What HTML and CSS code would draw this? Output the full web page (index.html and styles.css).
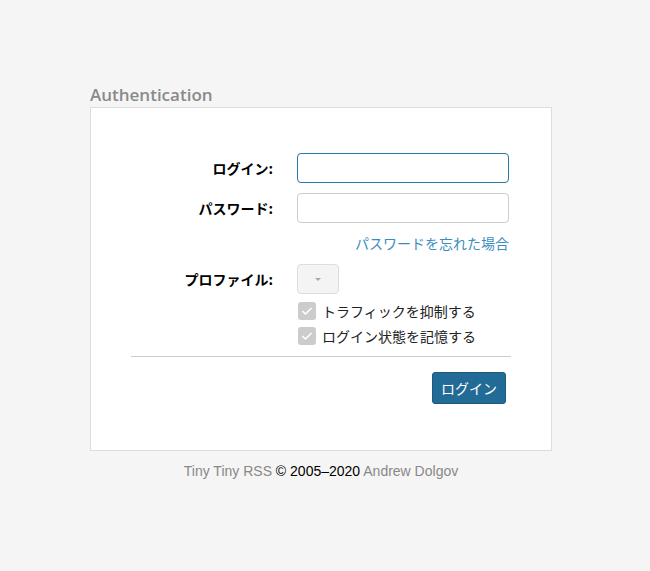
FILE: index.html
```html
<!DOCTYPE html>
<html>
    <head>
        <meta charset="UTF-8">
        <title>Tiny Tiny RSS : ログイン</title>
        <link rel="stylesheet" href="styles.css">
    </head>
    <body>
        <div class="container">
            <h1 class="title">Authentication</h1>
            <div class="panel">
                <form class="loginForm">
                    <div class="row rowInput">
                        <label class="label">ログイン:</label>
                        <div class="field"><input class="input inputFocus" type="text"></div>
                    </div>
                    <div class="row rowInput">
                        <label class="label">パスワード:</label>
                        <div class="field"><input class="input" type="password"></div>
                    </div>
                    <div class="row">
                        <div class="label"></div>
                        <div class="field linkField"><a class="forgot" href="#">パスワードを忘れた場合</a></div>
                    </div>
                    <div class="row rowProfile">
                        <label class="label">プロファイル:</label>
                        <div class="field"><div class="select"><span class="caret"></span></div></div>
                    </div>
                    <div class="row rowCheck">
                        <div class="label"></div>
                        <div class="field">
                            <label class="check"><span class="box"><svg width="12" height="10" viewBox="0 0 12 10"><path d="M1.5 5.2 L4.5 8 L10.5 2" fill="none" stroke="#fff" stroke-width="1.6"/></svg></span>トラフィックを抑制する</label>
                            <label class="check"><span class="box"><svg width="12" height="10" viewBox="0 0 12 10"><path d="M1.5 5.2 L4.5 8 L10.5 2" fill="none" stroke="#fff" stroke-width="1.6"/></svg></span>ログイン状態を記憶する</label>
                        </div>
                    </div>
                    <hr class="divider">
                    <div class="actions">
                        <button class="loginButton" type="button">ログイン</button>
                    </div>
                </form>
            </div>
            <div class="footer">
                <a href="#">Tiny Tiny RSS</a> © 2005–2020 <a href="#">Andrew Dolgov</a>
            </div>
        </div>
    </body>
</html>
```

FILE: styles.css
```css
body {
    margin: 0;
    background-color: #f5f5f5;
    font-family: "Liberation Sans", "Noto Sans CJK JP", sans-serif;
    font-size: 14px;
    color: #000;
}

.container {
    width: 462px;
    margin: 0 auto;
    padding-top: 85px;
    position: relative;
    left: -4px;
}

.title {
    margin: 0 0 2px 0;
    font-family: "Open Sans", "Noto Sans", sans-serif;
    font-size: 17px;
    font-weight: 600;
    color: #8a8a8a;
    line-height: 20px;
}

.panel {
    background-color: #fff;
    border: 1px solid #ddd;
    padding: 45px 40px 46px 40px;
}

.row {
    display: grid;
    grid-template-columns: 166px 214px;
    align-items: center;
}

.rowInput {
    margin-bottom: 10px;
}

.label {
    text-align: right;
    padding-right: 24px;
    font-weight: bold;
    font-family: "Noto Sans CJK JP", sans-serif;
    font-size: 14px;
}

.field {
    display: flex;
    flex-direction: column;
}

.input {
    box-sizing: border-box;
    width: 212px;
    height: 30px;
    border: 1px solid #ccc;
    border-radius: 4px;
    font-size: 14px;
    outline: none;
}

.inputFocus {
    border-color: #2a76a6;
}

.linkField {
    align-items: flex-end;
    padding-right: 2px;
    height: 30px;
    line-height: 20px;
}

.forgot {
    font-family: "Noto Sans CJK JP", sans-serif;
    color: #3b8dc0;
    text-decoration: none;
    font-size: 14px;
}

.rowProfile {
    margin-top: 1px;
}

.select {
    box-sizing: border-box;
    width: 42px;
    height: 30px;
    border: 1px solid #ddd;
    border-radius: 4px;
    background-color: #f4f4f4;
    display: flex;
    align-items: center;
    justify-content: center;
}

.caret {
    width: 0;
    height: 0;
    border-left: 3px solid transparent;
    border-right: 3px solid transparent;
    border-top: 3px solid #aaa;
}

.rowCheck {
    margin-top: 4px;
}

.check {
    display: flex;
    align-items: center;
    height: 25px;
    font-family: "Noto Sans CJK JP", sans-serif;
    font-size: 14px;
    color: #222;
}

.box {
    width: 18px;
    height: 18px;
    background-color: #ccc;
    border-radius: 3px;
    margin: 0 6px 0 1px;
    display: flex;
    align-items: center;
    justify-content: center;
}

.divider {
    border: 0;
    border-top: 1px solid #ccc;
    margin: 8px 0 15px 0;
}

.actions {
    display: flex;
    justify-content: flex-end;
    padding-right: 5px;
}

.loginButton {
    background-color: #236b97;
    color: #fff;
    border: 1px solid #1d5a80;
    border-radius: 3px;
    height: 32px;
    padding: 0 8px;
    font-family: "Noto Sans CJK JP", sans-serif;
    font-size: 14px;
    cursor: pointer;
}

.footer {
    text-align: center;
    margin-top: 12px;
    color: #000;
    font-size: 14px;
}

.footer a {
    color: #888;
    text-decoration: none;
}
```
